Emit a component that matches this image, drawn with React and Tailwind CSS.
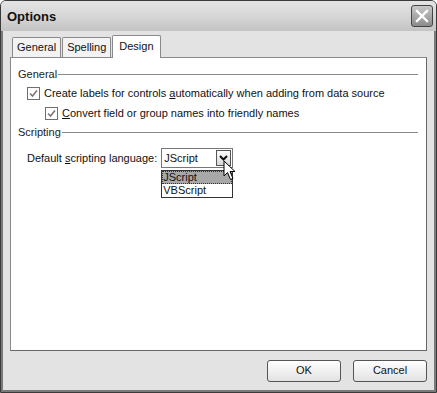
import React, { useState } from 'react';

const font = { fontFamily: '"Liberation Sans", Arial, sans-serif' };

const CheckBox = ({ checked }) => (
  <span className="inline-flex h-[13px] w-[13px] shrink-0 items-center justify-center border border-[#6f6f6f] bg-white">
    {checked && (
      <svg width="9" height="9" viewBox="0 0 9 9">
        <path d="M1 4.5 L3.5 7 L8 1.5" fill="none" stroke="#777" strokeWidth="1.6" />
      </svg>
    )}
  </span>
);

const GroupLabel = ({ children }) => (
  <div className="flex items-center gap-[1px]">
    <span className="text-[#222]">{children}</span>
    <div className="h-px flex-1 bg-[#8a8a8a]" />
  </div>
);

const Tab = ({ label, active }) => (
  <div
    className={
      active
        ? 'relative z-10 -mb-px flex h-[23px] items-start border border-b-0 border-[#8a8a8a] bg-white px-[6px] pt-[4px] rounded-t-[2px]'
        : 'flex h-[20px] items-center border border-b-0 border-[#8a8a8a] bg-[#f3f3f3] px-[4px] rounded-t-[2px]'
    }
  >
    {label}
  </div>
);

const DialogButton = ({ label }) => (
  <button className="h-[22px] w-[74px] rounded-[3px] border border-[#555] bg-gradient-to-b from-white to-[#e2e2e2] text-[#111]">
    {label}
  </button>
);

export default function App() {
  const [lang] = useState('JScript');

  return (
    <div className="h-[393px] w-[437px] bg-white text-[11px] leading-[13px] text-[#111]" style={font}>
      <div className="flex h-full flex-col rounded-t-[6px] border border-[#3a3a3a] bg-[#e3e3e3]">
        <div className="flex h-[30px] items-center justify-between rounded-t-[5px] bg-gradient-to-b from-[#e4e4e4] via-[#d6d6d6] to-[#c4c4c4] pl-[6px] pr-[3px]">
          <span className="text-[13px] font-bold text-[#111]">Options</span>
          <div className="flex h-[22px] w-[22px] items-center justify-center rounded-[3px] border border-[#444] bg-gradient-to-b from-[#c8c8c8] to-[#8c8c8c]">
            <svg width="14" height="14" viewBox="0 0 14 14">
              <path d="M2 2 L12 12 M12 2 L2 12" stroke="#fff" strokeWidth="2.4" strokeLinecap="square" />
            </svg>
          </div>
        </div>

        <div className="flex flex-1 flex-col border-x-2 border-b-2 border-[#7a7a7a] px-[7px]">
          <div className="mt-[4px] flex items-end gap-[1px] pl-[2px]">
            <Tab label="General" />
            <Tab label="Spelling" />
            <Tab label="Design" active />
          </div>

          <div className="flex h-[294px] flex-col border border-[#8a8a8a] border-r-[#666] border-b-[#666] bg-white pl-[7px] pr-[8px] pt-[10px]">
            <GroupLabel>General</GroupLabel>
            <div className="mt-[6px] flex items-center gap-[4px] whitespace-nowrap pl-[9px]">
              <CheckBox checked />
              <span>
                Create labels for controls <u>a</u>utomatically when adding from data source
              </span>
            </div>
            <div className="mt-[7px] flex items-center gap-[4px] whitespace-nowrap pl-[27px]">
              <CheckBox checked />
              <span>
                <u>C</u>onvert field or group names into friendly names
              </span>
            </div>
            <div className="mt-[6px]">
              <GroupLabel>Scripting</GroupLabel>
            </div>
            <div className="mt-[9px] flex items-start gap-[4px] pl-[9px]">
              <span className="whitespace-nowrap pt-[4px]">
                Default <u>s</u>cripting language:
              </span>
              <div className="relative flex flex-col">
                <div className="flex h-[20px] w-[72px] items-center justify-between border border-[#777] bg-white pl-[2px] pr-[1px]">
                  <span>{lang}</span>
                  <div className="flex h-[16px] w-[15px] items-center justify-center border border-[#555] bg-gradient-to-b from-white to-[#d8d8d8]">
                    <svg width="9" height="6" viewBox="0 0 9 6">
                      <path d="M1 1 L4.5 4.5 L8 1" fill="none" stroke="#111" strokeWidth="2" />
                    </svg>
                  </div>
                </div>
                <div className="mt-[2px] flex w-[72px] flex-col border border-[#333] bg-white">
                  <span className="bg-[#a8a8a8] pl-[1px] leading-[13px] outline outline-1 outline-dotted outline-[#333] -outline-offset-1">JScript</span>
                  <span className="pl-[1px] leading-[13px]">VBScript</span>
                </div>
                <svg className="absolute left-[62px] top-[12px]" width="14" height="22" viewBox="0 0 14 22">
                  <path d="M1 1 L1 16 L4.5 12.5 L7.5 19.5 L10 18.5 L7 11.5 L12 11.5 Z" fill="#fff" stroke="#000" strokeWidth="1" />
                </svg>
              </div>
            </div>
          </div>

          <div className="flex flex-1 items-center justify-end gap-[12px]">
            <DialogButton label="OK" />
            <DialogButton label="Cancel" />
          </div>
        </div>
      </div>
    </div>
  );
}
